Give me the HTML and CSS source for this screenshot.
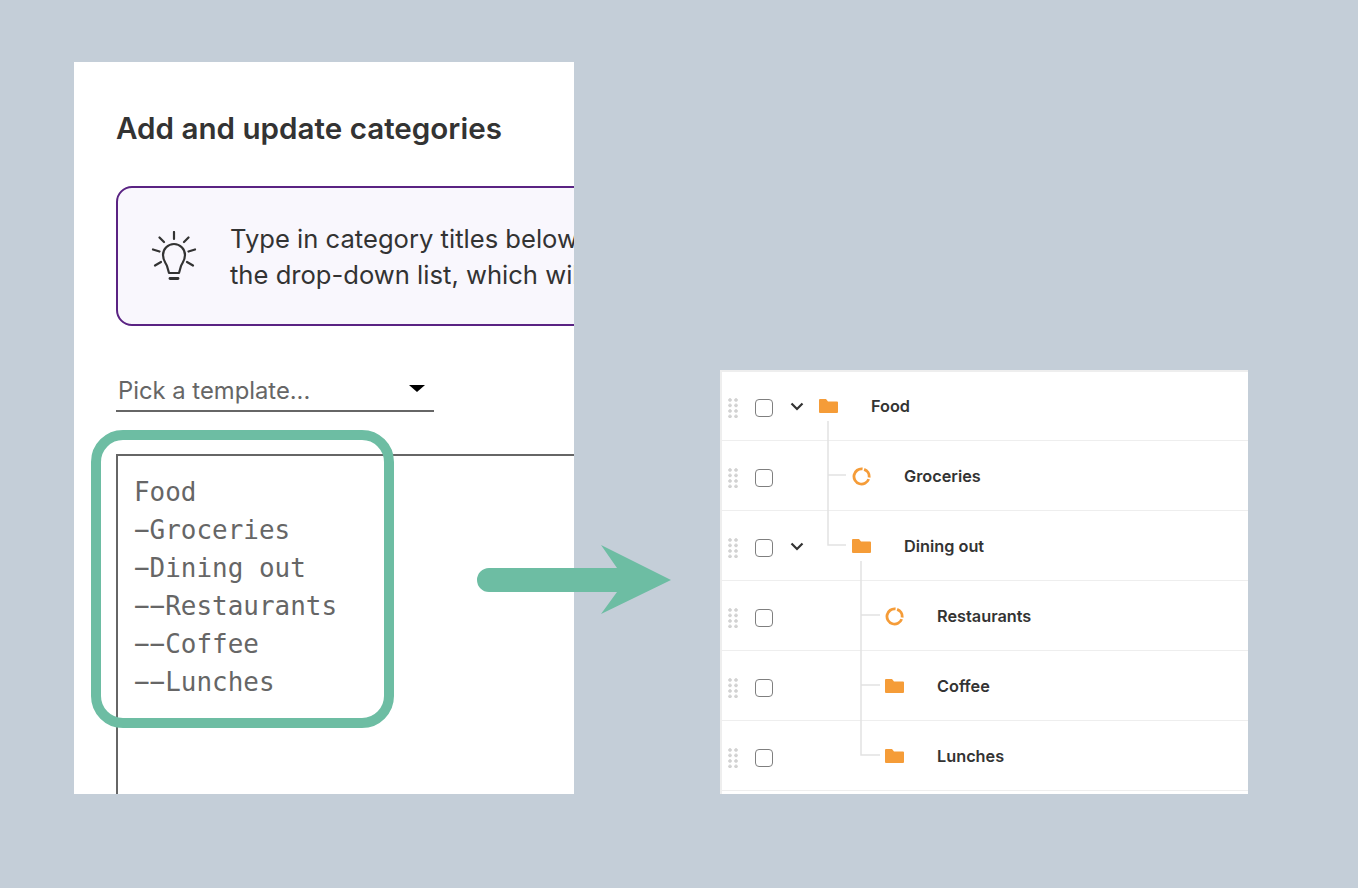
FILE: index.html
```html
<!DOCTYPE html>
<html lang="en">
<head>
    <meta charset="UTF-8">
    <title>Add and update categories</title>
    <link rel="stylesheet" href="styles.css">
</head>
<body>
    <div class="stage">
        <div class="form-panel">
            <h2 class="title">Add and update categories</h2>
            <div class="notice">
                <svg class="bulb" width="46" height="50" viewBox="0 0 46 50" fill="none" stroke="#333" stroke-width="2.200" stroke-linecap="round" stroke-linejoin="round">
                    <path d="M23 1v7M8.500 6.500l4.500 4.500M37.500 6.500l-4.500 4.500M2 18.500l6.500 2M44 18.500l-6.500 2M4 34.500l6-3.500M42 34.500l-6-3.500"/>
                    <path d="M18 42l-2-7c-1-3-4-5-4-11a11 11 0 0 1 22 0c0 6-3 8-4 11l-2 7z"/>
                    <path d="M19 47.500h8" stroke-width="2.800"/>
                </svg>
                <p class="notice-text">Type in category titles below or choose a template from<br>the drop-down list, which will fill in the box for you.</p>
            </div>
            <div class="picker">
                <span>Pick a template...</span>
                <i class="caret"></i>
            </div>
            <pre class="titles">Food
−Groceries
−Dining out
−−Restaurants
−−Coffee
−−Lunches</pre>
        </div>

        <div class="tree-panel">
            <div class="row">
                <span class="grip"></span><span class="check"></span>
                <svg class="chev" width="14" height="9" viewBox="0 0 14 9"><path d="M1.5 1.5L7 7l5.500-5.500" fill="none" stroke="#333" stroke-width="2.200"/></svg>
                <svg class="ico" width="19" height="16" viewBox="0 0 19 16"><use href="#folder"/></svg>
                <span class="label">Food</span>
            </div>
            <div class="row level-1">
                <span class="grip"></span><span class="check"></span><span class="chev-slot"></span>
                <svg class="ico" width="19" height="19" viewBox="0 0 19 19"><use href="#ring"/></svg>
                <span class="label">Groceries</span>
            </div>
            <div class="row level-1">
                <span class="grip"></span><span class="check"></span>
                <svg class="chev" width="14" height="9" viewBox="0 0 14 9"><path d="M1.5 1.5L7 7l5.500-5.500" fill="none" stroke="#333" stroke-width="2.200"/></svg>
                <svg class="ico" width="19" height="16" viewBox="0 0 19 16"><use href="#folder"/></svg>
                <span class="label">Dining out</span>
            </div>
            <div class="row level-2">
                <span class="grip"></span><span class="check"></span><span class="chev-slot"></span>
                <svg class="ico" width="19" height="19" viewBox="0 0 19 19"><use href="#ring"/></svg>
                <span class="label">Restaurants</span>
            </div>
            <div class="row level-2">
                <span class="grip"></span><span class="check"></span><span class="chev-slot"></span>
                <svg class="ico" width="19" height="16" viewBox="0 0 19 16"><use href="#folder"/></svg>
                <span class="label">Coffee</span>
            </div>
            <div class="row level-2">
                <span class="grip"></span><span class="check"></span><span class="chev-slot"></span>
                <svg class="ico" width="19" height="16" viewBox="0 0 19 16"><use href="#folder"/></svg>
                <span class="label">Lunches</span>
            </div>

            <!-- tree connector lines -->
            <svg class="tree-lines" width="528" height="424" viewBox="0 0 528 424" fill="none" stroke="#e2e2e2" stroke-width="1.500">
                <path d="M108 51v124h18M108 105h18"/>
                <path d="M141 191v194h19M141 245h19M141 315h19"/>
            </svg>
        </div>

        <div class="highlight"></div>
        <svg class="arrow" width="196" height="70" viewBox="0 0 196 70">
            <path d="M12 23h128L124 0l70 35-70 34 16-22H12a12 12 0 0 1 0-24z" fill="#6dbda3"/>
        </svg>
    </div>

    <svg width="0" height="0" class="defs">
        <symbol id="folder" viewBox="0 0 19 16">
            <path d="M1 1h6l2 2.500h9a1 1 0 0 1 1 1V14a1 1 0 0 1-1 1H1a1 1 0 0 1-1-1V2a1 1 0 0 1 1-1z" fill="#f59c38"/>
        </symbol>
        <symbol id="ring" viewBox="0 0 19 19">
            <path transform="rotate(14 9.500 9.500)" d="M8.700 1.900A7.600 7.600 0 1 0 17.100 10.300M10.300 1.900a7.600 7.600 0 0 1 6.800 6.800" fill="none" stroke="#f59c38" stroke-width="2.800"/>
        </symbol>
    </svg>
</body>
</html>
```

FILE: styles.css
```css
* {
    box-sizing: border-box;
}
body {
    margin: 0;
    height: 888px;
    overflow: hidden;
    background: #c4ced8;
    font-family: Inter, Arial, sans-serif;
    color: #333;
}
.stage {
    position: relative;
    display: flex;
    align-items: flex-end;
    gap: 146px;
    height: 794px;
    padding: 62px 0 0 74px;
}
.defs {
    position: absolute;
}

/* left panel */
.form-panel {
    flex: none;
    width: 500px;
    height: 732px;
    padding: 48px 0 0 42px;
    background: #fff;
    overflow: hidden;
}
.title {
    margin: 0 0 40px;
    font-size: 29.600px;
    line-height: 36px;
    font-weight: 580;
}
.notice {
    display: flex;
    align-items: center;
    width: 640px;
    height: 140px;
    padding-left: 33px;
    border: 2px solid #5a2383;
    border-radius: 16px;
    background: #f9f7fd;
}
.bulb {
    flex: none;
}
.notice-text {
    margin: 2px 0 0 33px;
    font-size: 25.600px;
    line-height: 36px;
    white-space: nowrap;
}
.picker {
    display: flex;
    align-items: center;
    justify-content: space-between;
    width: 318px;
    height: 48px;
    margin-top: 38px;
    padding: 6px 9px 0 2px;
    border-bottom: 2px solid #666;
    font-size: 23.800px;
    color: #666;
}
.caret {
    width: 0;
    height: 0;
    margin-top: -4px;
    border-left: 8px solid transparent;
    border-right: 8px solid transparent;
    border-top: 7px solid #000;
}
.titles {
    width: 600px;
    height: 500px;
    margin: 42px 0 0;
    padding: 17px 16px;
    border: 2px solid #666;
    font-family: "DejaVu Sans Mono", monospace;
    font-size: 25.950px;
    line-height: 38px;
    color: #666;
}

/* right panel */
.tree-panel {
    position: relative;
    flex: none;
    width: 528px;
    height: 424px;
    padding-left: 1px;
    border-top: 2px solid #eee;
    background: #fff;
    box-shadow: inset 2px 0 0 #eee;
    overflow: hidden;
}
.row {
    display: flex;
    align-items: center;
    height: 70px;
    padding: 1px 0 0 7px;
    border-bottom: 1px solid #eee;
}
.row:first-child {
    height: 69px;
    padding-top: 0;
}
.grip {
    flex: none;
    width: 10px;
    height: 20px;
    margin-top: 3px;
    background: radial-gradient(circle at 2px 2px, #d2d2d2 1.500px, transparent 2px) 0 0 / 6px 5.500px;
}
.check {
    flex: none;
    width: 18px;
    height: 18px;
    margin: 4px 0 0 17px;
    border: 1.500px solid #7f7f7f;
    border-radius: 4px;
}
.chev {
    flex: none;
    margin-left: 17px;
}
.chev-slot {
    flex: none;
    width: 14px;
    margin-left: 17px;
}
.ico {
    flex: none;
    margin-left: 15px;
}
.label {
    margin-left: 33px;
    font-size: 16.300px;
    font-weight: 580;
}
.level-1 .ico {
    margin-left: 48px;
}
.level-2 .ico {
    margin-left: 81px;
}
.tree-lines {
    position: absolute;
    left: 0;
    top: -2px;
}

/* overlays */
.highlight {
    position: absolute;
    left: 91px;
    top: 430px;
    width: 303px;
    height: 298px;
    border: 10px solid #6dbda3;
    border-radius: 32px;
}
.arrow {
    position: absolute;
    left: 477px;
    top: 545px;
}
```
